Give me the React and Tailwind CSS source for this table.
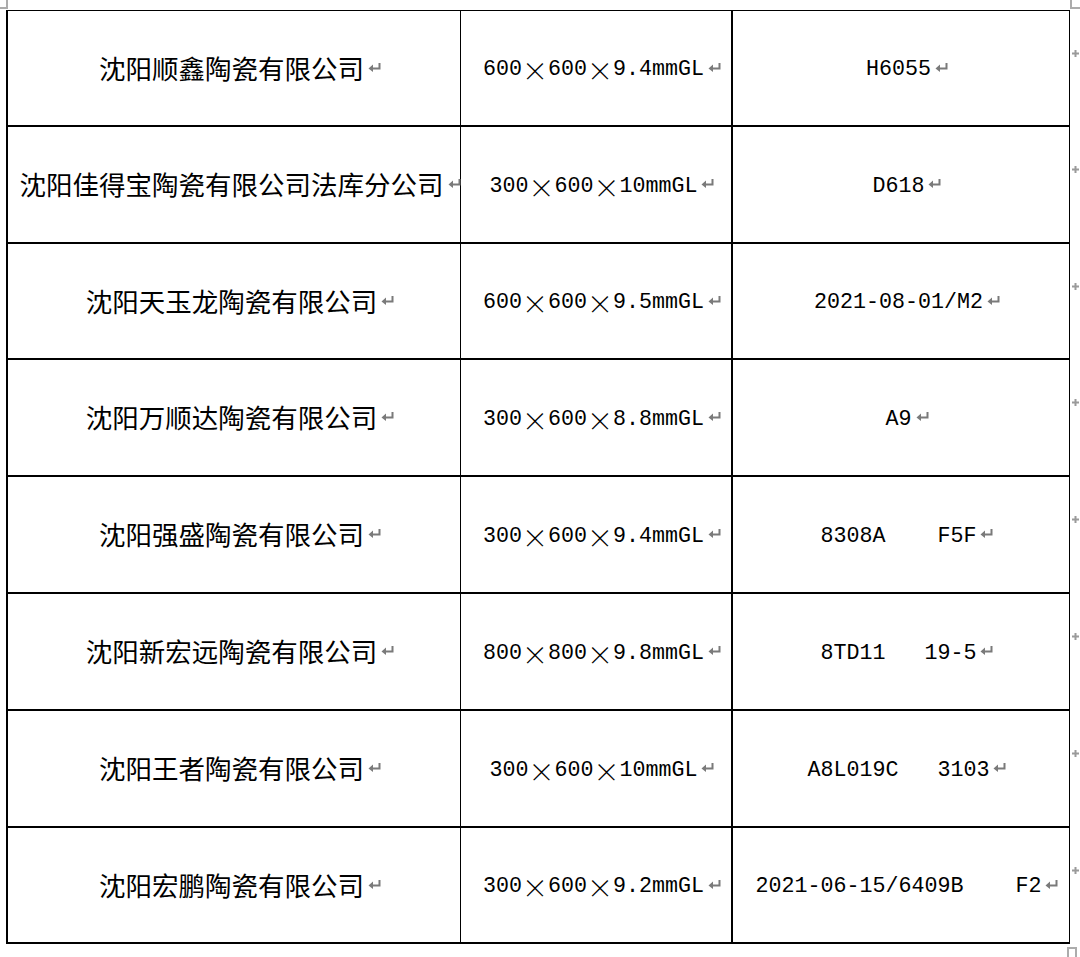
import React from "react";

const rows = [
    { name: "沈阳顺鑫陶瓷有限公司", size: ["600", "600", "9.4mmGL"], code: "H6055", h: "h-[116px]" },
    { name: "沈阳佳得宝陶瓷有限公司法库分公司", size: ["300", "600", "10mmGL"], code: "D618", h: "h-[117px]" },
    { name: "沈阳天玉龙陶瓷有限公司", size: ["600", "600", "9.5mmGL"], code: "2021-08-01/M2", h: "h-[116px]" },
    { name: "沈阳万顺达陶瓷有限公司", size: ["300", "600", "8.8mmGL"], code: "A9", h: "h-[117px]" },
    { name: "沈阳强盛陶瓷有限公司", size: ["300", "600", "9.4mmGL"], code: "8308A    F5F", h: "h-[117px]" },
    { name: "沈阳新宏远陶瓷有限公司", size: ["800", "800", "9.8mmGL"], code: "8TD11   19-5", h: "h-[117px]" },
    { name: "沈阳王者陶瓷有限公司", size: ["300", "600", "10mmGL"], code: "A8L019C   3103", h: "h-[117px]" },
    { name: "沈阳宏鹏陶瓷有限公司", size: ["300", "600", "9.2mmGL"], code: "2021-06-15/6409B    F2", h: "h-[116px]" },
];

const cjk = { fontFamily: '"Noto Sans CJK SC", "Noto Sans", sans-serif' };
const mono = { fontFamily: '"Liberation Mono", "DejaVu Sans Mono", monospace' };

// Word's paragraph mark
function ReturnMark() {
    return (
        <svg width="13" height="9" viewBox="0 0 13 9" className="ml-[4px] shrink-0 -translate-y-[1px]">
            <path d="M11.5 0 V5.5 H4" stroke="#7a7a7a" strokeWidth="2" fill="none" />
            <path d="M0.5 5.5 L5 1.5 L5 9 Z" fill="#7a7a7a" />
        </svg>
    );
}

function RowEndMark() {
    return (
        <svg width="7" height="7" viewBox="0 0 7 7" className="absolute left-[1064px] top-[39px]">
            <path d="M2.5 0 H4.5 V2.5 H7 V4.5 H4.5 V7 H2.5 V4.5 H0 V2.5 H2.5 Z" fill="#9a9a9a" />
        </svg>
    );
}

function Cell({ className, children }) {
    return (
        <div className={`flex items-center justify-center whitespace-nowrap pl-[12px] ${className}`}>
            {children}
            <ReturnMark />
        </div>
    );
}

function Times() {
    return (
        <span className="inline-block w-[26px] text-center text-[26px] font-light leading-none" style={cjk}>
            ×
        </span>
    );
}

export default function App() {
    return (
        <div className="relative w-[1080px] h-[957px] bg-white text-black overflow-hidden">
            {/* corner marks */}
            <div className="absolute left-0 top-0 w-[8px] h-[9px] border-r-2 border-b-2 border-[#acacac]" />
            <div className="absolute left-[1070px] top-0 w-[10px] h-[9px] border-l-2 border-b-2 border-[#acacac]" />
            <div className="absolute left-[1067px] top-[947px] w-[10px] h-[12px] border-2 border-[#acacac]" />

            <div className="ml-[6px] mt-[10px] w-[1064px] border-l-2 border-t border-black">
                {rows.map((row, i) => (
                    <div key={i} className={`relative grid grid-cols-[453px_272px_337px] border-b-2 border-black ${row.h}`}>
                        <Cell className="border-r border-black">
                            <span className="text-[26.5px] leading-none" style={cjk}>
                                {row.name}
                            </span>
                        </Cell>
                        <Cell className="border-r-2 border-black">
                            <span className="flex items-center text-[21.67px] leading-none translate-y-[2px]" style={mono}>
                                {row.size[0]}
                                <Times />
                                {row.size[1]}
                                <Times />
                                {row.size[2]}
                            </span>
                        </Cell>
                        <Cell className="border-r border-black">
                            <span className="whitespace-pre text-[21.67px] leading-none translate-y-[2px]" style={mono}>
                                {row.code}
                            </span>
                        </Cell>
                        <RowEndMark />
                    </div>
                ))}
            </div>
        </div>
    );
}
